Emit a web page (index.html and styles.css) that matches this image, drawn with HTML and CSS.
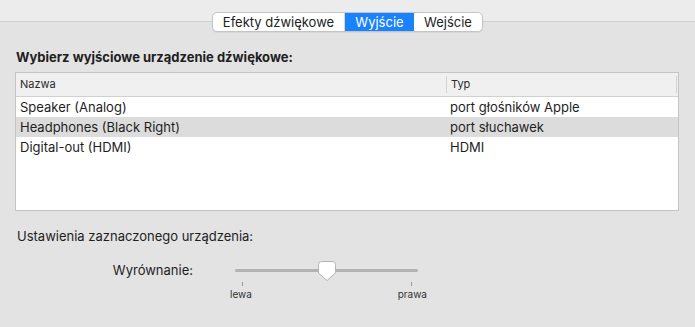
FILE: index.html
```html
<!DOCTYPE html>
<html>
<head>
  <title>Dźwięk</title>
  <link rel="stylesheet" href="styles.css">
</head>
<body>
  <div class="tabs-bar">
    <div class="tabs">
      <div class="tab tab-first">Efekty dźwiękowe</div>
      <div class="tab active">Wyjście</div>
      <div class="tab tab-last">Wejście</div>
    </div>
  </div>

  <div class="panel">
    <h4 class="title">Wybierz wyjściowe urządzenie dźwiękowe:</h4>

    <div class="table">
      <div class="thead">
        <div class="col col-name">Nazwa</div>
        <div class="col col-type">Typ</div>
        <div class="scroll-edge"></div>
      </div>
      <div class="row">
        <div class="col col-name">Speaker (Analog)</div>
        <div class="col col-type">port głośników Apple</div>
      </div>
      <div class="row selected">
        <div class="col col-name">Headphones (Black Right)</div>
        <div class="col col-type">port słuchawek</div>
      </div>
      <div class="row">
        <div class="col col-name">Digital-out (HDMI)</div>
        <div class="col col-type">HDMI</div>
      </div>
    </div>

    <p class="subtitle">Ustawienia zaznaczonego urządzenia:</p>

    <div class="balance">
      <div class="balance-label">Wyrównanie:</div>
      <div class="slider">
        <div class="track">
          <svg class="thumb" width="18" height="20" viewBox="0 0 18 20">
            <path d="M3.5 0.5 H14.5 A3 3 0 0 1 17.5 3.5 V12 L9 19.5 L0.5 12 V3.5 A3 3 0 0 1 3.5 0.5 Z" fill="#fff" stroke="#b4b4b4" stroke-width="1"/>
          </svg>
        </div>
        <div class="ticks">
          <span class="tick"></span>
          <span class="tick"></span>
        </div>
        <div class="ends">
          <span>lewa</span>
          <span>prawa</span>
        </div>
      </div>
    </div>
  </div>
</body>
</html>
```

FILE: styles.css
```css
body {
  margin: 0;
  background: #e3e3e3;
  font-family: Inter, 'Liberation Sans', sans-serif;
  font-size: 13px;
  color: #1e1e1e;
  width: 695px;
  height: 327px;
  overflow: hidden;
}

.tabs-bar {
  height: 22px;
  background: #ececec;
  border-bottom: 1px solid #d0d0d0;
  display: flex;
  justify-content: center;
  padding-top: 12px;
  box-sizing: border-box;
  overflow: visible;
}

.tabs {
  display: flex;
  height: 20px;
  width: 271px;
  box-sizing: border-box;
  border: 1px solid #c4c4c4;
  border-radius: 5px;
  background: #fff;
  overflow: hidden;
  box-shadow: 0 1px 1px rgba(0, 0, 0, 0.06);
  position: relative;
  z-index: 1;
}

.tab {
  display: flex;
  align-items: center;
  justify-content: center;
  font-size: 13px;
  color: #222;
  line-height: 18px;
}

.tab-first {
  width: 131px;
  border-right: 1px solid #d8d8d8;
}

.tab.active {
  width: 69px;
  background: #1a82fb;
  color: #fff;
}

.tab-last {
  flex: 1;
}

.panel {
  padding: 0 16px 0 15px;
}

.title {
  margin: 27px 0 0 1px;
  font-size: 13px;
  font-weight: 700;
  line-height: 16px;
  color: #1e1e1e;
}

.table {
  margin-top: 7px;
  height: 139px;
  box-sizing: border-box;
  border: 1px solid #c4c4c4;
  background: #fff;
}

.thead {
  display: flex;
  height: 23px;
  background: #f0f0f0;
  border-bottom: 1px solid #d0d0d0;
  font-size: 11px;
  color: #2a2a2a;
  position: relative;
}

.thead .col {
  line-height: 23px;
}

.thead .col-type {
  border-left: 1px solid #d4d4d4;
  height: 17px;
  margin-top: 3px;
  line-height: 17px;
}

.scroll-edge {
  position: absolute;
  right: 1px;
  top: 3px;
  width: 1px;
  height: 17px;
  background: #d4d4d4;
}

.col-name {
  width: 430px;
  padding-left: 4px;
  box-sizing: border-box;
}

.col-type {
  flex: 1;
  padding-left: 4px;
}

.row {
  display: flex;
  height: 20px;
  line-height: 20px;
}

.row.selected {
  background: #dcdcdc;
}

.subtitle {
  margin: 17px 0 0 2px;
  line-height: 16px;
}

.balance {
  display: flex;
  margin-top: 17px;
}

.balance-label {
  width: 178px;
  text-align: right;
  line-height: 18px;
}

.slider {
  margin-left: 32px;
  width: 203px;
}

.track {
  margin: 8px 10px 0 10px;
  height: 3px;
  border-radius: 2px;
  background: #b3b3b3;
  position: relative;
}

.thumb {
  position: absolute;
  left: 83px;
  top: -8px;
}

.ticks {
  display: flex;
  justify-content: space-between;
  padding: 0 16px 0 17px;
  margin-top: 10px;
}

.tick {
  width: 1px;
  height: 4px;
  background: #9a9a9a;
}

.ends {
  display: flex;
  justify-content: space-between;
  padding: 0 1px 0 5px;
  font-size: 10px;
  color: #333;
  margin-top: 2px;
}
```
